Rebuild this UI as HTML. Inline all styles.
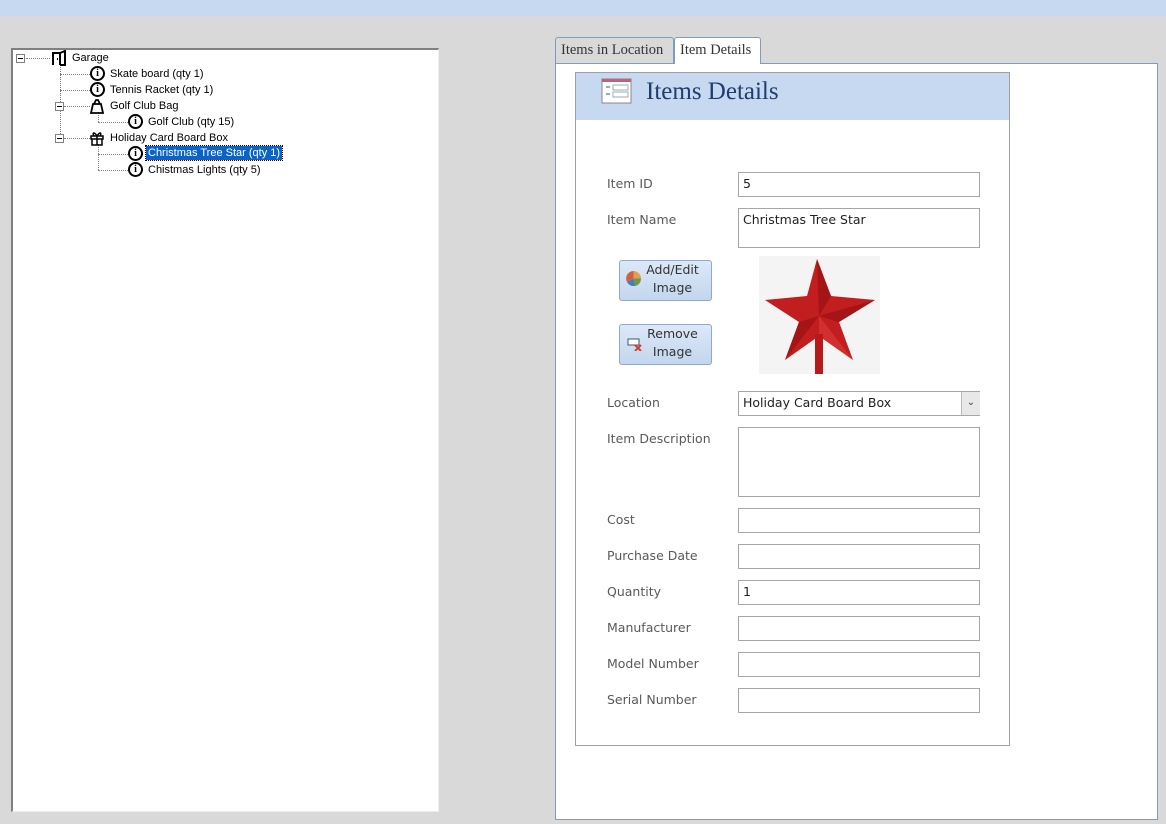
<!DOCTYPE html>
<html><head><style>
body{margin:0;width:1166px;height:824px;background:#d9d9d9;position:relative;overflow:hidden;font-family:"Liberation Sans",sans-serif}
.abs{position:absolute}
.tree{left:11px;top:48px;width:425px;height:761px;background:#fff;border-top:2px solid #808080;border-left:2px solid #808080;border-right:1px solid #eee;border-bottom:1px solid #eee}
.t{position:absolute;font-size:11px;color:#000;line-height:14px;white-space:nowrap}
.ic{position:absolute;width:11px;height:11px;border:2px solid #000;border-radius:50%;font:bold 10px/11px "Liberation Serif",serif;text-align:center;box-sizing:content-box;top:0}
.pm{position:absolute;width:7px;height:7px;border:1px solid #808080;background:#fff;font-size:9px;line-height:7px;text-align:center}
.pm:after{content:"";position:absolute;left:1px;top:3px;width:5px;height:1px;background:#000}
.dh{position:absolute;border-top:1px dotted #808080;height:0}
.dv{position:absolute;border-left:1px dotted #808080;width:0}
.lbl{position:absolute;left:607px;color:#595959;font-family:"DejaVu Sans","Liberation Sans",sans-serif;font-size:12.5px}
.in{position:absolute;left:738px;width:242px;background:#fff;border:1px solid #a6a6a6;font-family:"DejaVu Sans",sans-serif;font-size:12.5px;color:#222;padding:3px 0 0 4px;box-sizing:border-box}
.btn{position:absolute;left:619px;width:93px;height:41px;border:1px solid #8faacc;border-radius:3px;background:linear-gradient(#dce8f7,#c3d6ee);box-sizing:border-box;font-family:"DejaVu Sans",sans-serif;font-size:12.5px;color:#333;text-align:center;line-height:18px;padding-left:14px}
</style></head><body>
<div class="abs" style="left:0;top:0;width:1166px;height:16px;background:#c6d9f0"></div>
<div class="abs tree"></div>
<div class="dh" style="left:26px;top:58px;width:24px"></div>
<div class="dv" style="left:60px;top:62px;height:76px"></div>
<div class="dh" style="left:60px;top:74px;width:30px"></div>
<div class="dh" style="left:60px;top:90px;width:30px"></div>
<div class="dh" style="left:64px;top:106px;width:26px"></div>
<div class="dh" style="left:64px;top:138px;width:26px"></div>
<div class="dv" style="left:98px;top:112px;height:10px"></div>
<div class="dh" style="left:98px;top:122px;width:30px"></div>
<div class="dv" style="left:98px;top:144px;height:26px"></div>
<div class="dh" style="left:98px;top:154px;width:30px"></div>
<div class="dh" style="left:98px;top:170px;width:30px"></div>
<div class="pm" style="left:16px;top:54px"></div>
<div class="pm" style="left:55px;top:102px"></div>
<div class="pm" style="left:55px;top:134px"></div>
<svg class="abs" style="left:51px;top:50px" width="16" height="16"><path d="M2 15V3h7v12M9 3l5-2v14h-5M6 9h1" stroke="#000" stroke-width="2" fill="none"/></svg>
<div class="t" style="left:72px;top:51px">Garage</div>
<div class="ic" style="left:90px;top:66px">i</div><div class="t" style="left:110px;top:67px">Skate board (qty 1)</div>
<div class="ic" style="left:90px;top:82px">i</div><div class="t" style="left:110px;top:83px">Tennis Racket (qty 1)</div>
<svg class="abs" style="left:89px;top:98px" width="16" height="16"><path d="M2 15L4 6h8l2 9zM5 6l2-4h2l2 4" stroke="#000" stroke-width="1.8" fill="none"/></svg>
<div class="t" style="left:110px;top:99px">Golf Club Bag</div>
<div class="ic" style="left:128px;top:114px">i</div><div class="t" style="left:148px;top:115px">Golf Club (qty 15)</div>
<svg class="abs" style="left:89px;top:130px" width="16" height="16"><path d="M2 6h12v3H2zM3 9h10v6H3zM8 6v9M8 6C5 1 3 3 5 6M8 6c3-5 5-3 3 0" stroke="#000" stroke-width="1.5" fill="none"/></svg>
<div class="t" style="left:110px;top:131px">Holiday Card Board Box</div>
<div class="ic" style="left:128px;top:146px">i</div><div class="t" style="left:146px;top:146px;background:#0a64c8;color:#fff;padding:0 2px;outline:1px dotted #000">Christmas Tree Star (qty 1)</div>
<div class="ic" style="left:128px;top:162px">i</div><div class="t" style="left:148px;top:163px">Chistmas Lights (qty 5)</div>

<div class="abs" style="left:555px;top:63px;width:601px;height:755px;background:#fff;border:1px solid #7f9db9"></div>
<div class="abs" style="left:555px;top:37px;width:119px;height:26px;background:#d9d9d9;border:1px solid #7f9db9;border-bottom:none;border-radius:3px 3px 0 0;box-sizing:border-box;font:14.5px 'Liberation Serif',serif;color:#333;padding:4px 0 0 5px;white-space:nowrap">Items in Location</div>
<div class="abs" style="left:674px;top:37px;width:87px;height:27px;background:#fff;border:1px solid #7f9db9;border-bottom:none;border-radius:3px 3px 0 0;box-sizing:border-box;font:14.5px 'Liberation Serif',serif;color:#333;padding:4px 0 0 5px;white-space:nowrap">Item Details</div>
<div class="abs" style="left:575px;top:72px;width:433px;height:672px;border:1px solid #a0a0a0;background:#fff"></div>
<div class="abs" style="left:576px;top:73px;width:433px;height:47px;background:#c6d9f0"></div>
<svg class="abs" style="left:601px;top:77px" width="32" height="28"><rect x="1" y="2" width="29" height="24" fill="#fff" stroke="#888"/><rect x="1" y="2" width="29" height="3" fill="#c0607a"/><rect x="5" y="9" width="4" height="2" fill="#9ab"/><rect x="12" y="8" width="15" height="5" fill="none" stroke="#9ab"/><rect x="5" y="16" width="4" height="2" fill="#9ab"/><rect x="12" y="15" width="15" height="5" fill="none" stroke="#9ab"/></svg>
<div class="abs" style="left:646px;top:78px;font:25px 'Liberation Serif',serif;color:#1f3d6e">Items Details</div>

<div class="lbl" style="top:176px">Item ID</div><div class="in" style="top:172px;height:25px">5</div>
<div class="lbl" style="top:212px">Item Name</div><div class="in" style="top:208px;height:40px">Christmas Tree Star</div>
<div class="btn" style="top:260px">Add/Edit Image</div>
<svg class="abs" style="left:626px;top:271px" width="15" height="15"><path d="M7.5 7.5L7.5 0A7.5 7.5 0 0 1 15 7.5Z" fill="#e0a050"/><path d="M7.5 7.5L15 7.5A7.5 7.5 0 0 1 9 15Z" fill="#6a9a4a"/><path d="M7.5 7.5L9 15A7.5 7.5 0 0 1 1 11Z" fill="#4a7ab8"/><path d="M7.5 7.5L1 11A7.5 7.5 0 0 1 7.5 0Z" fill="#d06040"/></svg>
<div class="btn" style="top:324px">Remove Image</div>
<svg class="abs" style="left:627px;top:337px" width="16" height="14"><rect x="1" y="2" width="11" height="6" fill="#fff" stroke="#456"/><path d="M8 8l6 6M14 8l-6 6" stroke="#d04030" stroke-width="2"/></svg>
<div class="abs" style="left:759px;top:256px;width:121px;height:118px;background:#f4f4f4"></div>
<svg class="abs" style="left:759px;top:256px" width="121" height="118"><polygon points="58,3 72,40 116,44 80,66 94,104 60,80 26,104 40,66 6,44 48,40" fill="#c21d1f"/><polygon points="58,3 60,60 72,40" fill="#a51416"/><polygon points="116,44 60,60 80,66" fill="#a51416"/><polygon points="94,104 60,60 60,80" fill="#d2302f"/><polygon points="26,104 60,60 40,66" fill="#a51416"/><rect x="56" y="78" width="8" height="40" fill="#b81a1c"/></svg>
<div class="lbl" style="top:395px">Location</div><div class="in" style="top:391px;height:25px">Holiday Card Board Box</div>
<div class="abs" style="left:961px;top:392px;width:18px;height:23px;background:#e8e8e8;border-left:1px solid #bbb;font-size:10px;text-align:center;line-height:22px;color:#444">&#8964;</div>
<div class="lbl" style="top:431px">Item Description</div><div class="in" style="top:427px;height:70px"></div>
<div class="lbl" style="top:512px">Cost</div><div class="in" style="top:508px;height:25px"></div>
<div class="lbl" style="top:548px">Purchase Date</div><div class="in" style="top:544px;height:25px"></div>
<div class="lbl" style="top:584px">Quantity</div><div class="in" style="top:580px;height:25px">1</div>
<div class="lbl" style="top:620px">Manufacturer</div><div class="in" style="top:616px;height:25px"></div>
<div class="lbl" style="top:656px">Model Number</div><div class="in" style="top:652px;height:25px"></div>
<div class="lbl" style="top:692px">Serial Number</div><div class="in" style="top:688px;height:25px"></div>
</body></html>
